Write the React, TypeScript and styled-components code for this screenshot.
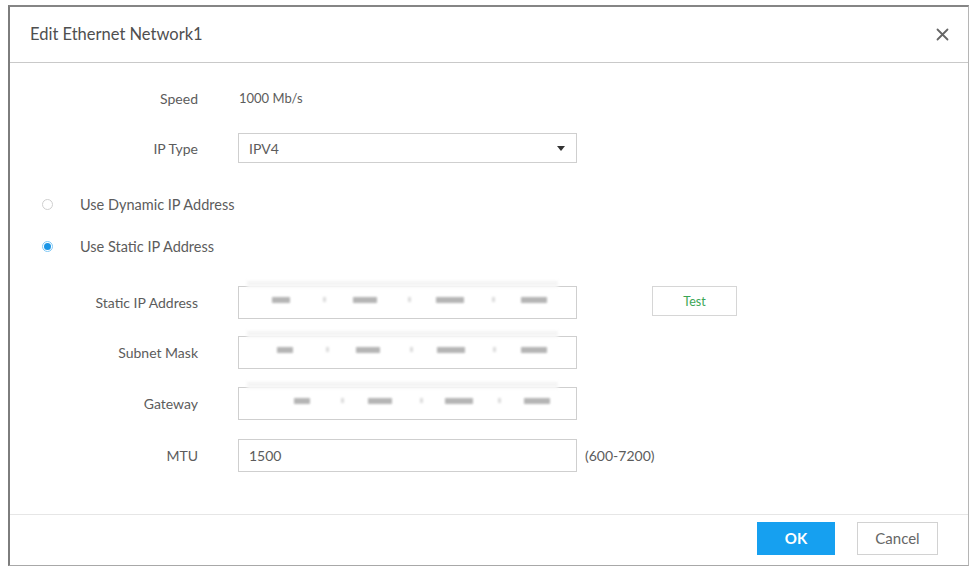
import React from "react";
import styled, { createGlobalStyle } from "styled-components";

const Global = createGlobalStyle`
  html, body { margin: 0; padding: 0; background: #fff; }
  body { font-family: Lato, "Noto Sans", "Liberation Sans", sans-serif; color: #555; }
  * { box-sizing: border-box; }
`;

const Dialog = styled.div`
  margin: 5px 0 0 8px;
  width: 961px;
  height: 561px;
  border-top: 2px solid #858585;
  border-left: 2px solid #7d7d7d;
  border-right: 1px solid #b5b5b5;
  border-bottom: 1px solid #a8a8a8;
  display: flex;
  flex-direction: column;
  background: #fff;
`;

const Header = styled.div`
  height: 56px;
  flex: none;
  display: flex;
  align-items: center;
  justify-content: space-between;
  padding: 0 18px 0 20px;
  border-bottom: 1px solid #c9c9c9;
`;

const Title = styled.div`
  font-size: 16.5px;
  color: #4f4f4f;
  padding-bottom: 2px;
`;

const CloseButton = styled.button`
  border: none;
  background: none;
  padding: 0;
  width: 16px;
  height: 16px;
  display: flex;
  align-items: center;
  justify-content: center;
  cursor: pointer;
`;

const Body = styled.div`
  flex: 1;
  padding-top: 20px;
  display: flex;
  flex-direction: column;
`;

const Row = styled.div<{ $top: number; $h: number }>`
  display: flex;
  align-items: center;
  margin-top: ${(p) => p.$top}px;
  height: ${(p) => p.$h}px;
`;

const Label = styled.div`
  width: 188px;
  text-align: right;
  font-size: 14px;
  color: #5c5c5c;
  flex: none;
`;

const Value = styled.div`
  margin-left: 41px;
  font-size: 13px;
  color: #5c5c5c;
`;

const Field = styled.div`
  position: relative;
  margin-left: 40px;
  width: 339px;
  height: 100%;
  border: 1px solid #cfcfcf;
  display: flex;
  align-items: center;
  padding: 0 10px;
  font-size: 14px;
  color: #5c5c5c;
  background: #fff;
`;

const Arrow = styled.div`
  position: absolute;
  right: 11px;
  top: 50%;
  margin-top: -2px;
  width: 0;
  height: 0;
  border-left: 4px solid transparent;
  border-right: 4px solid transparent;
  border-top: 5px solid #333;
`;

const RadioRow = styled.label`
  display: flex;
  align-items: center;
  padding-left: 32px;
  font-size: 14.5px;
  color: #5c5c5c;
`;

const RadioCircle = styled.span<{ $on?: boolean }>`
  width: 11px;
  height: 11px;
  border-radius: 50%;
  border: 1px solid ${(p) => (p.$on ? "#7fc8f5" : "#cfcfcf")};
  display: flex;
  align-items: center;
  justify-content: center;
  margin-right: 27px;
  flex: none;
  &::after {
    content: "";
    width: 7px;
    height: 7px;
    border-radius: 50%;
    background: ${(p) => (p.$on ? "#1a95e6" : "transparent")};
  }
`;

const Smear = styled.div`
  position: absolute;
  left: 8px;
  right: 18px;
  top: -6px;
  height: 7px;
  background: linear-gradient(#f1f1f1, #fafafa);
  filter: blur(1.5px);
`;

const IpCells = styled.div<{ $shift: number }>`
  display: grid;
  grid-template-columns: repeat(4, 1fr);
  width: 100%;
  padding-left: ${(p) => p.$shift}px;
  margin-top: -6px;
`;

const IpCell = styled.div`
  position: relative;
  display: flex;
  justify-content: center;
  align-items: center;
`;

const Blob = styled.span<{ $w: number }>`
  width: ${(p) => p.$w}px;
  height: 6px;
  background: #a9a9a9;
  filter: blur(1.3px);
  opacity: 0.85;
`;

const Dot = styled.span`
  position: absolute;
  right: -3px;
  width: 3px;
  height: 5px;
  background: #dcdcdc;
  filter: blur(1px);
`;

const TestButton = styled.button`
  margin-left: 75px;
  width: 85px;
  height: 30px;
  align-self: flex-start;
  border: 1px solid #d6d6d6;
  background: #fff;
  color: #3aa655;
  font-family: inherit;
  font-size: 12.5px;
`;

const Hint = styled.div`
  margin-left: 8px;
  font-size: 14px;
  color: #5c5c5c;
`;

const Footer = styled.div`
  height: 51px;
  flex: none;
  border-top: 1px solid #e6e6e6;
  display: flex;
  align-items: center;
  justify-content: flex-end;
  gap: 22px;
  padding: 0 30px 4px 0;
`;

const Button = styled.button<{ $primary?: boolean }>`
  height: 33px;
  width: ${(p) => (p.$primary ? 78 : 81)}px;
  border: 1px solid ${(p) => (p.$primary ? "#16a0f0" : "#d2d2d2")};
  background: ${(p) => (p.$primary ? "#16a0f0" : "#fff")};
  color: ${(p) => (p.$primary ? "#fff" : "#666")};
  font-family: inherit;
  font-size: 15px;
  font-weight: ${(p) => (p.$primary ? 700 : 400)};
`;

const blobSets: number[][] = [
  [18, 24, 28, 26],
  [16, 24, 28, 26],
  [16, 24, 28, 26],
];

function IpField({ set, shift }: { set: number; shift: number }) {
  return (
    <Field style={{ padding: 0 }}>
      <Smear />
      <IpCells $shift={shift}>
        {blobSets[set].map((w, i) => (
          <IpCell key={i}>
            <Blob $w={w} />
            {i < 3 && <Dot />}
          </IpCell>
        ))}
      </IpCells>
    </Field>
  );
}

export default function App() {
  return (
    <>
      <Global />
      <Dialog>
        <Header>
          <Title>Edit Ethernet Network1</Title>
          <CloseButton aria-label="Close">
            <svg width="13" height="13" viewBox="0 0 13 13">
              <path d="M1.5 1.5 L11.5 11.5 M11.5 1.5 L1.5 11.5" stroke="#666" strokeWidth="1.8" strokeLinecap="round" />
            </svg>
          </CloseButton>
        </Header>
        <Body>
          <Row $top={0} $h={30}>
            <Label>Speed</Label>
            <Value>1000 Mb/s</Value>
          </Row>
          <Row $top={20} $h={30}>
            <Label>IP Type</Label>
            <Field>
              IPV4
              <Arrow />
            </Field>
          </Row>
          <Row $top={29} $h={24}>
            <RadioRow>
              <RadioCircle />
              Use Dynamic IP Address
            </RadioRow>
          </Row>
          <Row $top={18} $h={24}>
            <RadioRow>
              <RadioCircle $on />
              Use Static IP Address
            </RadioRow>
          </Row>
          <Row $top={28} $h={33}>
            <Label>Static IP Address</Label>
            <IpField set={0} shift={0} />
            <TestButton>Test</TestButton>
          </Row>
          <Row $top={17} $h={33}>
            <Label>Subnet Mask</Label>
            <IpField set={1} shift={4} />
          </Row>
          <Row $top={18} $h={33}>
            <Label>Gateway</Label>
            <IpField set={2} shift={24} />
          </Row>
          <Row $top={19} $h={33}>
            <Label>MTU</Label>
            <Field>1500</Field>
            <Hint>(600-7200)</Hint>
          </Row>
        </Body>
        <Footer>
          <Button $primary>OK</Button>
          <Button>Cancel</Button>
        </Footer>
      </Dialog>
    </>
  );
}
